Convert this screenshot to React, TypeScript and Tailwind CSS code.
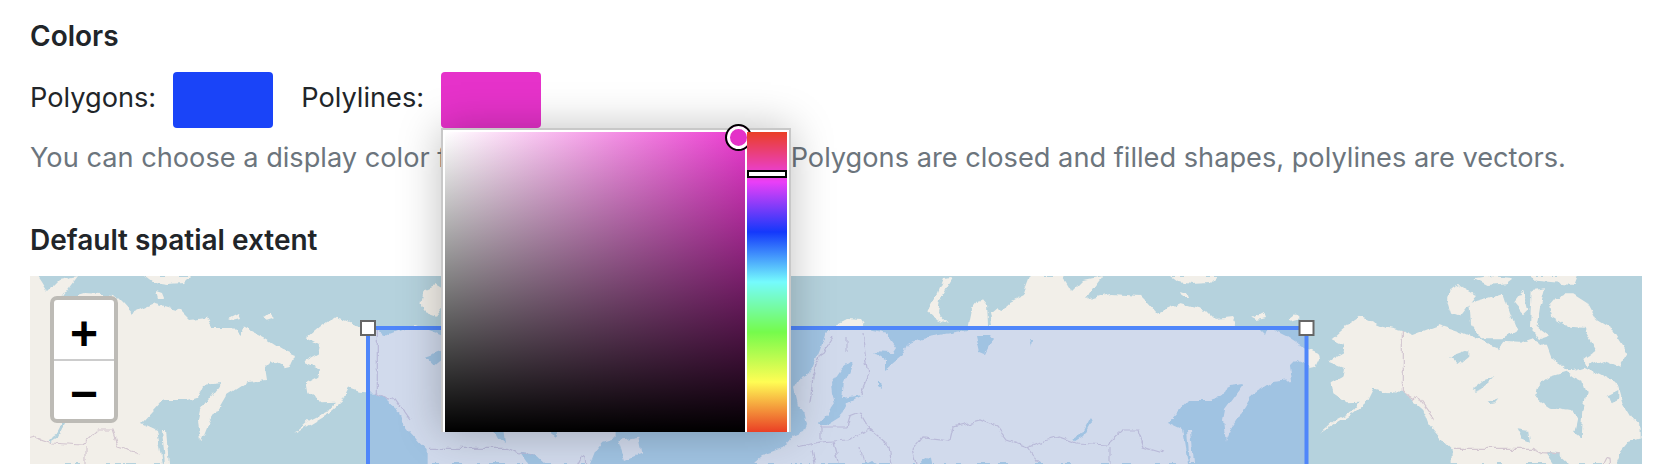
import React from 'react';

const LAND = '#f2efe9';
const WATER = '#b5d2dd';
const BORDER = '#d3c6d0';

// Eurasia, in page pixels
const eurasia =
  'M752 464 L762 455 L772 452 L785 447 L793 436 L803 432 L806 425 L803 412 L798 405 L794 388 L800 378 L811 372 L820 350 L825 335 L835 325 L847 319 L862 320 L868 329 L887 333 L897 347 L893 353 L873 352 L885 360 L885 370 L897 360 L903 355 L908 345 L923 338 L950 333 L968 330 L972 310 L982 297 L987 303 L988 325 L992 325 L990 313 L997 307 L1002 312 L1007 303 L1023 295 L1030 276 L1062 276 L1066 282 L1072 292 L1084 280 L1103 276 L1085 300 L1110 293 L1140 295 L1148 303 L1157 313 L1180 303 L1205 310 L1215 320 L1232 318 L1238 328 L1258 328 L1265 335 L1268 327 L1288 337 L1305 348 L1320 357 L1312 367 L1297 360 L1290 367 L1292 380 L1272 382 L1252 395 L1245 407 L1232 427 L1226 442 L1223 420 L1225 410 L1245 383 L1228 385 L1222 397 L1212 400 L1188 400 L1167 423 L1182 430 L1185 447 L1188 464 Z';

const eurasiaIslands = [
  'M927 312 L937 293 L943 278 L953 277 L947 287 L940 300 L938 313 L947 323 L933 317 Z',
  'M1170 276 L1217 276 L1210 283 L1192 284 L1178 282 Z',
  'M1181 291 L1187 293 L1189 298 L1183 298 Z',
  'M1253 318 L1263 313 L1265 318 L1257 320 Z',
];

const eurasiaWater = [
  'M850 361 L842 367 L831 383 L832 393 L835 403 L828 413 L817 425 L827 425 L840 417 L847 403 L862 395 L842 398 L844 383 L851 366 Z',
  'M878 380 L880 382 L881 389 L878 387 Z',
  'M920 464 L925 458 L930 459 L931 464 Z',
  'M866 464 L872 461 L877 464 Z',
  'M976 335 L980 353 L985 355 L990 345 L994 340 L990 335 Z',
  'M1028 340 L1031 340 L1030 346 Z',
];

const eurasiaBorders = [
  'M833 337 L820 357 L813 377 L810 403',
  'M862 333 L865 353 L868 377 L861 393',
  'M847 337 L847 353',
  'M913 450 L923 437 L950 440 L953 427 L980 420 L997 427 L1007 440 L1027 447 L1037 443 L1060 437 L1077 443 L1107 445 L1123 430 L1137 430 L1143 447 L1163 453',
  'M913 450 L917 464',
  'M1027 447 L1040 464',
  'M1110 447 L1110 464',
  'M860 413 L870 430 L890 447 L893 464',
  'M847 427 L821 427 L821 440',
  'M847 427 L850 417 L860 413',
  'M870 430 L847 440 L820 442 L797 447',
  'M833 442 L838 464',
  'M812 450 L815 464',
  'M860 445 L864 464',
];

// North America, in crop pixels (three per page pixel)
const america =
  'M420 140 L480 165 L545 180 L580 195 L660 165 L720 185 L780 210 L825 228 L832 240 L850 215 L900 218 L940 205 L975 225 L990 265 L1020 280 L1040 300 L1060 300 L1090 290 L1150 320 L1195 345 L1210 400 L1240 450 L1262 470 L1262 505 L1225 515 L1200 545 L1185 582 L695 582 L695 540 L670 515 L640 480 L625 460 L610 420 L570 385 L545 368 L490 365 L460 355 L440 395 L400 430 L350 460 L300 490 L345 450 L395 425 L420 395 L380 397 L340 370 L335 340 L370 320 L375 295 L325 275 L370 250 L375 225 L335 205 L375 170 Z';

const americaIslands = [
  'M685 60 L720 45 L770 75 L720 140 L690 130 L680 100 Z',
  'M745 100 L800 85 L850 70 L870 130 L890 180 L850 205 L780 205 L750 160 Z',
  'M760 25 L810 18 L880 25 L860 40 L800 45 Z',
  'M930 18 L1070 18 L1060 45 L950 35 Z',
  'M880 100 L910 60 L925 120 L910 135 Z',
  'M935 60 L975 55 L960 110 L950 170 L990 200 L960 210 L930 170 Z',
  'M985 110 L1020 70 L1060 70 L1100 95 L1130 150 L1180 180 L1225 250 L1200 290 L1150 270 L1100 290 L1090 270 L1130 240 L1090 170 L1030 165 L990 140 Z',
  'M1010 280 L1060 310 L1020 315 Z',
  'M1270 510 L1330 500 L1340 550 L1290 570 Z',
  'M205 145 L225 130 L240 145 L215 152 Z',
  'M265 240 L300 255 L285 290 L265 295 Z',
];

const americaWater = [
  'M1040 305 L990 320 L950 350 L945 380 L990 410 L1050 420 L1075 445 L1065 490 L1085 505 L1090 420 L1100 370 L1090 335 L1060 320 Z',
  'M1165 375 L1195 360 L1195 390 L1175 400 Z',
  'M690 260 L745 240 L745 260 L715 285 Z',
  'M755 358 L790 330 L820 325 L785 355 L765 362 Z',
  'M805 395 L835 385 L825 397 L810 400 Z',
  'M890 475 L925 480 L930 515 L905 505 Z',
  'M975 545 L1015 550 L1050 582 L1000 582 Z',
];

const americaBorders = [
  'M547 180 L547 368 L578 388 L595 380 L645 450',
  'M702 535 L940 535 L965 548 L1020 552',
  'M1150 582 L1160 562 L1170 565 L1172 582',
];

function World() {
  return (
    <g>
      <path d={eurasia} fill={LAND} />
      {eurasiaIslands.map((d) => (
        <path key={d} d={d} fill={LAND} />
      ))}
      {eurasiaWater.map((d) => (
        <path key={d} d={d} fill={WATER} />
      ))}
      <path d="M1092 418 L1083 435 L1075 440" fill="none" stroke={WATER} strokeWidth="3" />
      {eurasiaBorders.map((d) => (
        <path key={d} d={d} fill="none" stroke={BORDER} strokeWidth="1.2" />
      ))}
      <path d="M1187 430 L1190 464 L1194 464 L1191 430 Z" fill={LAND} />
      <g transform="translate(1220 270) scale(0.3333)">
        <path d={america} fill={LAND} />
        {americaIslands.map((d) => (
          <path key={d} d={d} fill={LAND} />
        ))}
        {americaWater.map((d) => (
          <path key={d} d={d} fill={WATER} />
        ))}
        {americaBorders.map((d) => (
          <path key={d} d={d} fill="none" stroke={BORDER} strokeWidth="3.6" />
        ))}
      </g>
    </g>
  );
}

function MapView() {
  return (
    <div className="relative h-[188px] overflow-hidden bg-[#b5d2dd]">
      <svg className="block h-[188px] w-[1612px]" viewBox="30 276 1612 188">
        {/* rough up the coasts, the tiles are bitmaps */}
        <filter id="coast" x="0" y="0" width="100%" height="100%">
          <feTurbulence type="fractalNoise" baseFrequency="0.09" numOctaves="3" seed="4" />
          <feDisplacementMap in="SourceGraphic" scale="7" xChannelSelector="R" yChannelSelector="G" />
          <feGaussianBlur stdDeviation="0.6" />
        </filter>
        <g filter="url(#coast)">
          <rect x="30" y="276" width="1612" height="188" fill={WATER} />
          <World />
          <g transform="translate(-1025 0)">
            <World />
          </g>
        </g>
      </svg>
      <svg className="absolute left-0 top-0 h-[188px] w-[1612px]" viewBox="30 276 1612 188">
        <path d="M368 328 H1306.5 V470 H368 Z" fill="#4f86fa" fillOpacity="0.2" stroke="#4f86fa" strokeWidth="4" />
        <rect x="361" y="321" width="14" height="14" fill="#fff" stroke="#666" strokeWidth="2" />
        <rect x="1299.5" y="321" width="14" height="14" fill="#fff" stroke="#666" strokeWidth="2" />
      </svg>
      <div className="absolute left-5 top-5 flex w-[68px] flex-col rounded-[7px] border-4 border-[#bdbbb6] bg-white font-['Liberation_Sans',sans-serif] text-[48px] font-bold text-black">
        <button className="flex h-[59px] items-center justify-center pt-2 leading-none">+</button>
        <div className="h-0.5 bg-[#cccccc]" />
        <button className="flex h-[58px] items-center justify-center pt-2 leading-none">−</button>
      </div>
    </div>
  );
}

function ColorPicker() {
  return (
    <div className="absolute left-0 top-full z-10 flex w-[350px] gap-0.5 border-x-2 border-t-2 border-[#c8c8c8] bg-white px-0.5 pt-0.5 shadow-[0_0_40px_rgba(0,0,0,0.25)]">
      <div className="relative h-[300px] w-[300px] bg-[linear-gradient(to_top,#000,transparent),linear-gradient(to_right,#fff,#eb3ad0)]">
        <div className="absolute left-[280px] top-[-8px] h-[27px] w-[27px] rounded-full border-2 border-black bg-[#e431c8] shadow-[inset_0_0_0_3px_#fff]" />
      </div>
      <div className="relative h-[300px] w-10 bg-[linear-gradient(to_bottom,#ea3f25_0%,#ea3ff7_16.67%,#1438fb_33.33%,#75fbfd_50%,#75fb4c_66.67%,#fffd54_83.33%,#ea3f25_100%)]">
        <div className="absolute left-0 top-[38px] h-2 w-10 border-2 border-black bg-white" />
      </div>
    </div>
  );
}

export default function App() {
  return (
    <div className="h-[464px] overflow-hidden bg-white pl-[30px] pr-[28px] pt-[18px] font-['Inter',sans-serif] text-[27.2px] text-[#212529]">
      <h5 className="mb-[18px] text-[28px] font-semibold leading-9">Colors</h5>
      <div className="flex h-14 items-center">
        <span className="mr-[17px] pb-1">Polygons:</span>
        <div className="h-14 w-[100px] rounded bg-[#1a44f8]" />
        <span className="ml-[28px] mr-[17px] pb-1">Polylines:</span>
        <div className="relative h-14 w-[100px] rounded bg-[#e632ca]">
          <ColorPicker />
        </div>
      </div>
      <p className="mt-[11px] leading-[38px] text-[#6c757d]">
        You can choose a display color for each vector layer type.&nbsp; Polygons are closed and filled shapes, polylines are vectors.
      </p>
      <h5 className="mb-[18px] mt-[45px] text-[28px] font-semibold leading-9">Default spatial extent</h5>
      <MapView />
    </div>
  );
}
